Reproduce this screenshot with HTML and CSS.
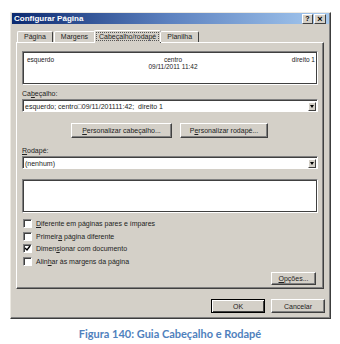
FILE: index.html
```html
<!DOCTYPE html>
<html lang="pt">
<head>
    <meta charset="UTF-8">
    <title>Configurar Página</title>
    <link rel="stylesheet" href="styles.css">
</head>
<body>
    <div class="dialog">
        <div class="titlebar">
            <span class="title">Configurar Página</span>
            <span class="ctl">?</span>
            <span class="ctl close">×</span>
        </div>
        <div class="tabs">
            <div class="tab">Página</div>
            <div class="tab">Margens</div>
            <div class="tab active"><span class="focus">Cabeçalho/rodapé</span></div>
            <div class="tab">Planilha</div>
        </div>
        <div class="panel">
            <div class="preview">
                <span class="left">esquerdo</span>
                <span class="center">centro<br>09/11/2011 11:42</span>
                <span class="right">direito 1</span>
            </div>
            <div class="label">Ca<u>b</u>eçalho:</div>
            <div class="select">
                <span class="value">esquerdo; centro□09/11/201111:42;&nbsp; direito 1</span>
                <span class="drop"></span>
            </div>
            <div class="btn-row">
                <div class="btn wide1"><span><u>P</u>ersonalizar cabeçalho...</span></div>
                <div class="btn wide2"><span>P<u>e</u>rsonalizar rodapé...</span></div>
            </div>
            <div class="label gap"><u>R</u>odapé:</div>
            <div class="select">
                <span class="value">(nenhum)</span>
                <span class="drop"></span>
            </div>
            <div class="preview empty"></div>
            <div class="checks">
                <div class="check"><span class="box"></span><span><u>D</u>iferente em páginas pares e ímpares</span></div>
                <div class="check"><span class="box"></span><span>Primeir<u>a</u> página diferente</span></div>
                <div class="check"><span class="box"><svg width="7" height="7" viewBox="0 0 7 7"><polyline points="1,3 3,5 6,1" fill="none" stroke="#000" stroke-width="1.4"/></svg></span><span>Dimen<u>s</u>ionar com documento</span></div>
                <div class="check"><span class="box"></span><span>Alin<u>h</u>ar às margens da página</span></div>
            </div>
            <div class="opt-row">
                <div class="btn opt"><span><u>O</u>pções...</span></div>
            </div>
        </div>
        <div class="footer">
            <div class="btn ok">OK</div>
            <div class="btn">Cancelar</div>
        </div>
    </div>
    <div class="caption">Figura 140: Guia Cabeçalho e Rodapé</div>
</body>
</html>
```

FILE: styles.css
```css
body {
    margin: 0;
    background: #fff;
    font-family: "Liberation Sans", Arial, sans-serif;
    font-size: 7px;
    color: #222;
}
.dialog {
    margin: 12px 0 0 10px;
    width: 321px;
    height: 307px;
    box-sizing: border-box;
    background: #d4d0c8;
    border: 1px solid;
    border-color: #ece9e2 #3c3c3c #3c3c3c #ece9e2;
    box-shadow: inset -1px -1px 0 #808080;
    display: flex;
    flex-direction: column;
}
.titlebar {
    margin: 0 1px;
    height: 11px;
    background: linear-gradient(to right, #0c2a70, #5d82c0 50%, #a6caf0);
    display: flex;
    align-items: center;
    padding: 0 3px 0 2px;
}
.title {
    flex: 1;
    color: #fff;
    font-weight: bold;
    font-size: 8px;
}
.ctl {
    width: 9px;
    height: 8px;
    margin-left: 1px;
    background: #d4d0c8;
    border: 1px solid;
    border-color: #fff #404040 #404040 #fff;
    font-size: 7px;
    font-weight: bold;
    line-height: 8px;
    text-align: center;
    color: #000;
}
.ctl.close {
    width: 10px;
    font-size: 9px;
}
.tabs {
    display: flex;
    align-items: flex-end;
    margin: 6px 0 0 6px;
    height: 12px;
    position: relative;
    z-index: 1;
}
.tab {
    height: 10px;
    line-height: 10px;
    padding: 0 6px;
    border: 1px solid;
    border-bottom: none;
    border-color: #fff #404040 #404040 #fff;
    border-radius: 2px 2px 0 0;
    margin-right: 1px;
    background: #d4d0c8;
}
.tab.active {
    height: 12px;
    line-height: 11px;
    padding: 0 2px;
    margin: 0 -1px 0 -2px;
    margin-bottom: -1px;
}
.focus {
    outline: 1px dotted #555;
    padding: 0 2px;
}
.panel {
    margin: 0 6px 0 5px;
    height: 247px;
    box-sizing: border-box;
    border: 1px solid;
    border-color: #fff #404040 #404040 #fff;
    box-shadow: inset -1px -1px 0 #808080;
    padding: 8px 5px 0 5px;
    display: flex;
    flex-direction: column;
}
.preview {
    height: 34px;
    flex-shrink: 0;
    box-sizing: border-box;
    background: #fff;
    border: 1px solid;
    border-color: #808080 #fff #fff #808080;
    box-shadow: inset 1px 1px 0 #404040, inset -1px -1px 0 #404040;
    display: flex;
    justify-content: space-between;
    padding: 4px 2px 0 4px;
    font-size: 6.5px;
    line-height: 7px;
}
.preview .center {
    text-align: center;
}
.preview.empty {
    margin-top: 10px;
}
.label {
    margin-top: 4px;
    height: 10px;
    line-height: 10px;
}
.label.gap {
    margin-top: 8px;
}
.select {
    height: 13px;
    flex-shrink: 0;
    box-sizing: border-box;
    background: #fff;
    border: 1px solid;
    border-color: #808080 #fff #fff #808080;
    box-shadow: inset 1px 1px 0 #404040;
    display: flex;
    align-items: center;
    padding: 1px 1px 0 2px;
}
.select .value {
    flex: 1;
}
.drop {
    width: 8px;
    height: 9px;
    box-sizing: border-box;
    background: #d4d0c8;
    border: 1px solid;
    border-color: #fff #404040 #404040 #fff;
    display: flex;
    align-items: center;
    justify-content: center;
}
.drop::after {
    content: "";
    border: 2px solid transparent;
    border-top: 3px solid #000;
    border-bottom: none;
}
.btn-row {
    display: flex;
    margin: 11px 0 0 49px;
    gap: 8px;
}
.btn {
    height: 14px;
    flex-shrink: 0;
    box-sizing: border-box;
    border: 1px solid;
    border-color: #fff #404040 #404040 #fff;
    box-shadow: inset -1px -1px 0 #808080;
    background: #d4d0c8;
    display: flex;
    align-items: center;
    justify-content: center;
    width: 54px;
}
.btn.wide1 {
    width: 101px;
    height: 15px;
}
.btn.wide2 {
    width: 88px;
    height: 15px;
}
.checks {
    margin-top: 4px;
}
.check {
    height: 12.7px;
    display: flex;
    align-items: center;
    padding-left: 1px;
}
.box {
    width: 7px;
    height: 7px;
    margin-right: 4px;
    background: #fff;
    border: 1px solid;
    border-color: #808080 #fff #fff #808080;
    box-shadow: inset 1px 1px 0 #404040;
    display: flex;
}
.opt-row {
    display: flex;
    justify-content: flex-end;
    margin-top: 4px;
    padding-right: 2px;
}
.btn.opt {
    width: 45px;
    height: 13px;
}
.footer {
    display: flex;
    justify-content: flex-end;
    gap: 6px;
    margin: 10px 5px 0 0;
}
.btn.ok {
    border-color: #000;
    box-shadow: inset 1px 1px 0 #fff, inset -1px -1px 0 #404040;
}
.caption {
    margin-top: 8px;
    text-align: center;
    font-family: Lato, "Open Sans", sans-serif;
    font-weight: bold;
    font-size: 11px;
    color: #4f81bd;
}
```
